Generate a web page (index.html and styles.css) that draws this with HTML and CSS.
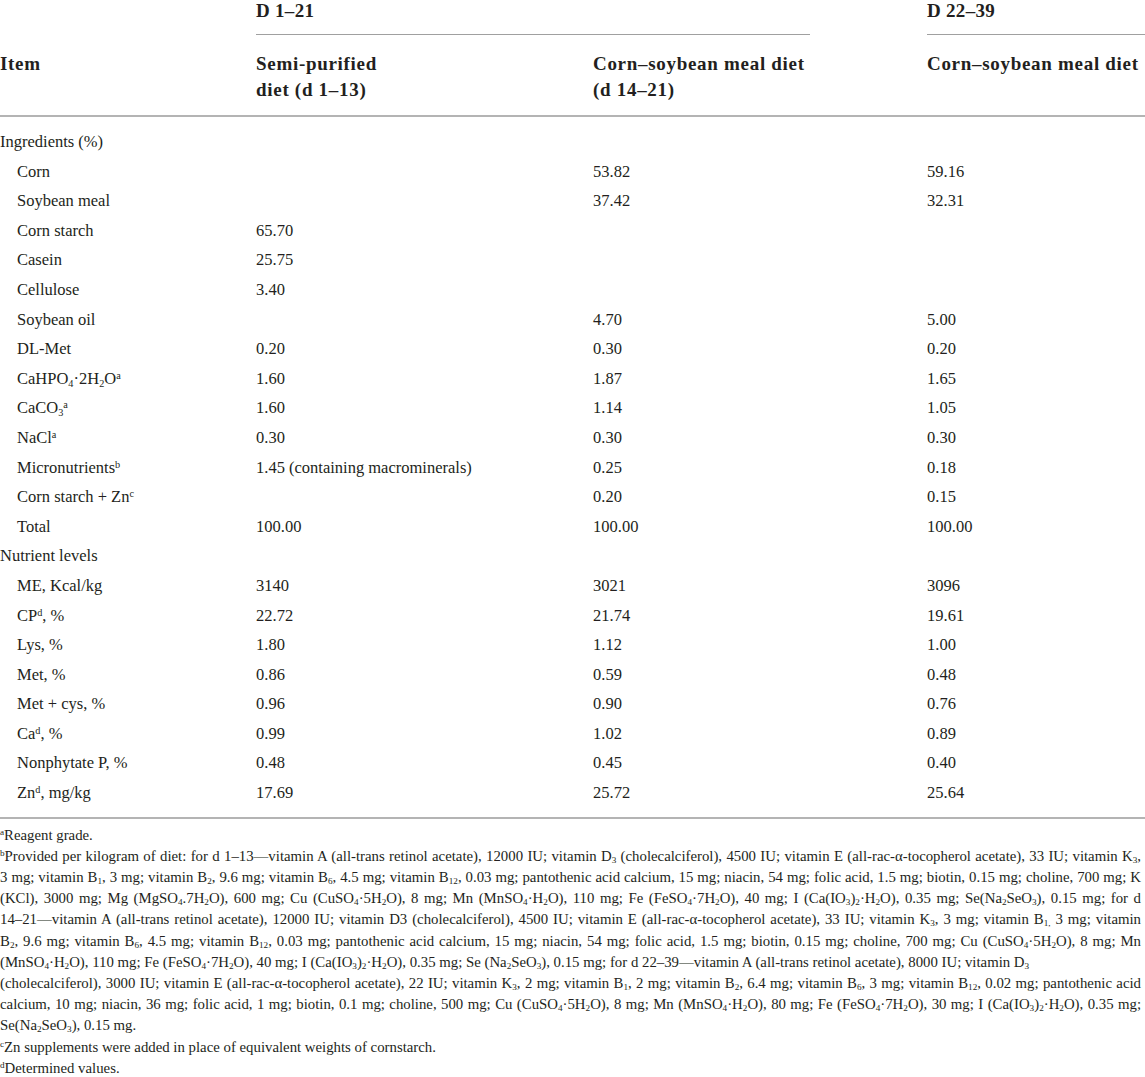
FILE: index.html
```html
<!DOCTYPE html>
<html lang="en">
<head>
  <meta charset="UTF-8">
  <title>Diet composition</title>
  <link rel="stylesheet" href="styles.css">
</head>
<body>
  <div class="table">
    <div class="row group-row">
      <div></div>
      <div class="group span-2"><div class="group-label">D 1–21</div></div>
      <div class="group last"><div class="group-label">D 22–39</div></div>
    </div>
    <div class="row head-row">
      <div>Item</div>
      <div>Semi-purified<br>diet (d 1–13)</div>
      <div>Corn–soybean meal diet<br>(d 14–21)</div>
      <div class="nowrap">Corn–soybean meal diet</div>
    </div>

    <div class="body">
      <div class="row"><div>Ingredients (%)</div><div></div><div></div><div></div></div>
      <div class="row"><div class="ind">Corn</div><div></div><div>53.82</div><div>59.16</div></div>
      <div class="row"><div class="ind">Soybean meal</div><div></div><div>37.42</div><div>32.31</div></div>
      <div class="row"><div class="ind">Corn starch</div><div>65.70</div><div></div><div></div></div>
      <div class="row"><div class="ind">Casein</div><div>25.75</div><div></div><div></div></div>
      <div class="row"><div class="ind">Cellulose</div><div>3.40</div><div></div><div></div></div>
      <div class="row"><div class="ind">Soybean oil</div><div></div><div>4.70</div><div>5.00</div></div>
      <div class="row"><div class="ind">DL-Met</div><div>0.20</div><div>0.30</div><div>0.20</div></div>
      <div class="row"><div class="ind">CaHPO<sub>4</sub>·2H<sub>2</sub>O<sup>a</sup></div><div>1.60</div><div>1.87</div><div>1.65</div></div>
      <div class="row"><div class="ind">CaCO<sub>3</sub><sup>a</sup></div><div>1.60</div><div>1.14</div><div>1.05</div></div>
      <div class="row"><div class="ind">NaCl<sup>a</sup></div><div>0.30</div><div>0.30</div><div>0.30</div></div>
      <div class="row"><div class="ind">Micronutrients<sup>b</sup></div><div>1.45 (containing macrominerals)</div><div>0.25</div><div>0.18</div></div>
      <div class="row"><div class="ind">Corn starch + Zn<sup>c</sup></div><div></div><div>0.20</div><div>0.15</div></div>
      <div class="row"><div class="ind">Total</div><div>100.00</div><div>100.00</div><div>100.00</div></div>
      <div class="row"><div>Nutrient levels</div><div></div><div></div><div></div></div>
      <div class="row"><div class="ind">ME, Kcal/kg</div><div>3140</div><div>3021</div><div>3096</div></div>
      <div class="row"><div class="ind">CP<sup>d</sup>, %</div><div>22.72</div><div>21.74</div><div>19.61</div></div>
      <div class="row"><div class="ind">Lys, %</div><div>1.80</div><div>1.12</div><div>1.00</div></div>
      <div class="row"><div class="ind">Met, %</div><div>0.86</div><div>0.59</div><div>0.48</div></div>
      <div class="row"><div class="ind">Met + cys, %</div><div>0.96</div><div>0.90</div><div>0.76</div></div>
      <div class="row"><div class="ind">Ca<sup>d</sup>, %</div><div>0.99</div><div>1.02</div><div>0.89</div></div>
      <div class="row"><div class="ind">Nonphytate P, %</div><div>0.48</div><div>0.45</div><div>0.40</div></div>
      <div class="row"><div class="ind">Zn<sup>d</sup>, mg/kg</div><div>17.69</div><div>25.72</div><div>25.64</div></div>
    </div>
  </div>

  <div class="notes">
    <div class="line"><sup>a</sup>Reagent grade.</div>
    <div class="line just"><sup>b</sup>Provided per kilogram of diet: for d 1–13—vitamin A (all-trans retinol acetate), 12000 IU; vitamin D<sub>3</sub> (cholecalciferol), 4500 IU; vitamin E (all-rac-α-tocopherol acetate), 33 IU; vitamin K<sub>3</sub>,</div>
    <div class="line just">3 mg; vitamin B<sub>1</sub>, 3 mg; vitamin B<sub>2</sub>, 9.6 mg; vitamin B<sub>6</sub>, 4.5 mg; vitamin B<sub>12</sub>, 0.03 mg; pantothenic acid calcium, 15 mg; niacin, 54 mg; folic acid, 1.5 mg; biotin, 0.15 mg; choline, 700 mg; K</div>
    <div class="line just">(KCl), 3000 mg; Mg (MgSO<sub>4</sub>.7H<sub>2</sub>O), 600 mg; Cu (CuSO<sub>4</sub>·5H<sub>2</sub>O), 8 mg; Mn (MnSO<sub>4</sub>·H<sub>2</sub>O), 110 mg; Fe (FeSO<sub>4</sub>·7H<sub>2</sub>O), 40 mg; I (Ca(IO<sub>3</sub>)<sub>2</sub>·H<sub>2</sub>O), 0.35 mg; Se(Na<sub>2</sub>SeO<sub>3</sub>), 0.15 mg; for d</div>
    <div class="line just">14–21—vitamin A (all-trans retinol acetate), 12000 IU; vitamin D3 (cholecalciferol), 4500 IU; vitamin E (all-rac-α-tocopherol acetate), 33 IU; vitamin K<sub>3</sub>, 3 mg; vitamin B<sub>1,</sub> 3 mg; vitamin</div>
    <div class="line just">B<sub>2</sub>, 9.6 mg; vitamin B<sub>6</sub>, 4.5 mg; vitamin B<sub>12</sub>, 0.03 mg; pantothenic acid calcium, 15 mg; niacin, 54 mg; folic acid, 1.5 mg; biotin, 0.15 mg; choline, 700 mg; Cu (CuSO<sub>4</sub>·5H<sub>2</sub>O), 8 mg; Mn</div>
    <div class="line">(MnSO<sub>4</sub>·H<sub>2</sub>O), 110 mg; Fe (FeSO<sub>4</sub>·7H<sub>2</sub>O), 40 mg; I (Ca(IO<sub>3</sub>)<sub>2</sub>·H<sub>2</sub>O), 0.35 mg; Se (Na<sub>2</sub>SeO<sub>3</sub>), 0.15 mg; for d 22–39—vitamin A (all-trans retinol acetate), 8000 IU; vitamin D<sub>3</sub></div>
    <div class="line just">(cholecalciferol), 3000 IU; vitamin E (all-rac-α-tocopherol acetate), 22 IU; vitamin K<sub>3</sub>, 2 mg; vitamin B<sub>1</sub>, 2 mg; vitamin B<sub>2</sub>, 6.4 mg; vitamin B<sub>6</sub>, 3 mg; vitamin B<sub>12</sub>, 0.02 mg; pantothenic acid</div>
    <div class="line just">calcium, 10 mg; niacin, 36 mg; folic acid, 1 mg; biotin, 0.1 mg; choline, 500 mg; Cu (CuSO<sub>4</sub>·5H<sub>2</sub>O), 8 mg; Mn (MnSO<sub>4</sub>·H<sub>2</sub>O), 80 mg; Fe (FeSO<sub>4</sub>·7H<sub>2</sub>O), 30 mg; I (Ca(IO<sub>3</sub>)<sub>2</sub>·H<sub>2</sub>O), 0.35 mg;</div>
    <div class="line">Se(Na<sub>2</sub>SeO<sub>3</sub>), 0.15 mg.</div>
    <div class="line"><sup>c</sup>Zn supplements were added in place of equivalent weights of cornstarch.</div>
    <div class="line"><sup>d</sup>Determined values.</div>
  </div>
</body>
</html>
```

FILE: styles.css
```css
body {
  margin: 0;
  font-family: "Liberation Serif", "Times New Roman", serif;
  color: #231f20;
  background: #fff;
  font-size: 16.5px;
  width: 1145px;
  overflow: hidden;
}
.row {
  display: grid;
  grid-template-columns: 256px 337px 334px 1fr;
}
.span-2 {
  grid-column: span 2;
}
.group-row {
  font-weight: bold;
  font-size: 19px;
  letter-spacing: 0.3px;
}
.group-label {
  line-height: 22px;
  padding-bottom: 12px;
  border-bottom: 1.5px solid #a0a0a0;
}
.span-2 .group-label {
  margin-right: 117px;
}
.head-row {
  font-weight: bold;
  font-size: 19px;
  letter-spacing: 0.7px;
  line-height: 26px;
  padding: 16px 0 12px;
  border-bottom: 2px solid #b4b4b4;
}
.nowrap {
  white-space: nowrap;
}
.body {
  padding: 10px 0 9px;
  border-bottom: 2px solid #b4b4b4;
}
.body .row {
  line-height: 29.6px;
  height: 29.6px;
}
.ind {
  padding-left: 17px;
}
sub, sup {
  line-height: 0;
  font-size: 0.62em;
}
sub {
  vertical-align: -0.25em;
}
sup {
  vertical-align: 0.5em;
}
.notes {
  padding-top: 6px;
  font-size: 14.8px;
  width: 1141px;
}
.line {
  line-height: 21.2px;
  white-space: nowrap;
}
.just {
  text-align: justify;
  text-align-last: justify;
}
```
